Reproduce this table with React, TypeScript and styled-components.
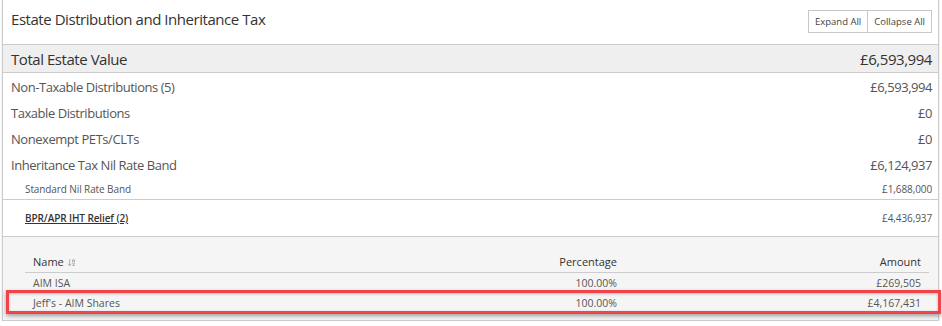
import React from "react";
import styled, { createGlobalStyle } from "styled-components";
import { ArrowDownAZ } from "lucide-react";

const GlobalStyle = createGlobalStyle`
  body {
    margin: 0;
    background: #ffffff;
    font-family: "Open Sans", "Noto Sans", sans-serif;
  }
`;

const Panel = styled.div`
  margin-left: 2px;
  width: 935px;
  border: 1px solid #cccccc;
  border-top: none;
  background: #ffffff;
  box-shadow: 0 1px 2px rgba(0, 0, 0, 0.15);
`;

const Header = styled.div`
  height: 44px;
  display: flex;
  align-items: center;
  justify-content: space-between;
  padding: 0 6px 0 8px;
  border-bottom: 1px solid #cccccc;
  h2 {
    margin: -6px 0 0 0;
    font-size: 15px;
    font-weight: 400;
    color: #333333;
    letter-spacing: -0.45px;
  }
`;

const ButtonGroup = styled.div`
  display: flex;
  margin-top: -2px;
`;

const ToolButton = styled.button`
  height: 23px;
  padding: 0 6px;
  font-family: inherit;
  font-size: 9.5px;
  color: #444444;
  background: #ffffff;
  border: 1px solid #c8c8c8;
  & + & {
    border-left: none;
  }
`;

const TotalRow = styled.div`
  height: 27px;
  display: flex;
  align-items: center;
  justify-content: space-between;
  padding: 0 6px 0 8px;
  background: #efefef;
  border-bottom: 1px solid #cccccc;
  font-size: 15px;
  color: #333333;
  letter-spacing: -0.45px;
`;

const Rows = styled.div`
  padding-top: 1px;
  border-bottom: 1px solid #cccccc;
`;

const Row = styled.div<{ $sub?: boolean }>`
  height: ${(p) => (p.$sub ? "21px" : "26px")};
  display: flex;
  align-items: center;
  justify-content: space-between;
  padding: ${(p) => (p.$sub ? "0 6px 0 22px" : "0 6px 0 8px")};
  font-size: ${(p) => (p.$sub ? "10px" : "13px")};
  color: #555555;
  letter-spacing: ${(p) => (p.$sub ? "-0.1px" : "-0.45px")};
`;

const ReliefRow = styled.div`
  height: 36px;
  display: flex;
  align-items: center;
  justify-content: space-between;
  padding: 0 6px 0 22px;
  font-size: 10px;
  color: #555555;
  letter-spacing: -0.1px;
  border-bottom: 1px solid #cccccc;
  a {
    color: #333333;
    font-weight: 600;
    text-decoration: underline;
  }
`;

const Detail = styled.div`
  background: #f5f5f5;
  padding: 13px 9px 7px 22px;
  position: relative;
`;

const Table = styled.table`
  width: 100%;
  border-collapse: collapse;
  table-layout: fixed;
  font-size: 10.5px;
  color: #555555;
  td {
    height: 20px;
    padding: 0 8px;
  }
`;

const Cell = styled.td<{ $align?: string }>`
  text-align: ${(p) => p.$align || "left"};
`;

const HeadCell = styled.th<{ $align?: string; $width?: string }>`
  width: ${(p) => p.$width || "auto"};
  height: 22px;
  padding: 0 8px;
  text-align: ${(p) => p.$align || "left"};
  font-weight: 400;
  font-size: 11px;
  color: #333333;
  border-bottom: 1px solid #cccccc;
  svg {
    vertical-align: -1px;
    margin-left: 3px;
    color: #999999;
  }
`;

const Highlight = styled.div`
  position: absolute;
  left: 3px;
  right: -3px;
  bottom: 6px;
  height: 18px;
  border: 3px solid #f0444a;
  box-shadow: 0 2px 4px rgba(0, 0, 0, 0.35), inset 0 1px 3px rgba(0, 0, 0, 0.25);
  pointer-events: none;
`;

const items = [
  { name: "AIM ISA", pct: "100.00%", amount: "£269,505" },
  { name: "Jeff's - AIM Shares", pct: "100.00%", amount: "£4,167,431" },
];

export default function App() {
  return (
    <>
      <GlobalStyle />
      <Panel>
        <Header>
          <h2>Estate Distribution and Inheritance Tax</h2>
          <ButtonGroup>
            <ToolButton>Expand All</ToolButton>
            <ToolButton>Collapse All</ToolButton>
          </ButtonGroup>
        </Header>
        <TotalRow>
          <span>Total Estate Value</span>
          <span>£6,593,994</span>
        </TotalRow>
        <Rows>
          <Row>
            <span>Non-Taxable Distributions (5)</span>
            <span>£6,593,994</span>
          </Row>
          <Row>
            <span>Taxable Distributions</span>
            <span>£0</span>
          </Row>
          <Row>
            <span>Nonexempt PETs/CLTs</span>
            <span>£0</span>
          </Row>
          <Row>
            <span>Inheritance Tax Nil Rate Band</span>
            <span>£6,124,937</span>
          </Row>
          <Row $sub>
            <span>Standard Nil Rate Band</span>
            <span>£1,688,000</span>
          </Row>
        </Rows>
        <ReliefRow>
          <a>BPR/APR IHT Relief (2)</a>
          <span>£4,436,937</span>
        </ReliefRow>
        <Detail>
          <Table>
            <thead>
              <tr>
                <HeadCell $width="358px">
                  Name
                  <ArrowDownAZ size={9} strokeWidth={2} />
                </HeadCell>
                <HeadCell $align="right" $width="210px">
                  Percentage
                </HeadCell>
                <HeadCell $align="right">Amount</HeadCell>
              </tr>
            </thead>
            <tbody>
              {items.map((it) => (
                <tr key={it.name}>
                  <Cell>{it.name}</Cell>
                  <Cell $align="right">{it.pct}</Cell>
                  <Cell $align="right">{it.amount}</Cell>
                </tr>
              ))}
            </tbody>
          </Table>
          <Highlight />
        </Detail>
      </Panel>
    </>
  );
}
